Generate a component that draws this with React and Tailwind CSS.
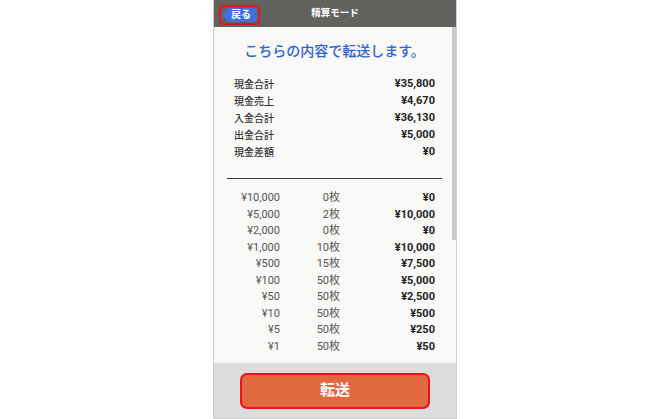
const summary = [
  ['現金合計', '¥35,800'],
  ['現金売上', '¥4,670'],
  ['入金合計', '¥36,130'],
  ['出金合計', '¥5,000'],
  ['現金差額', '¥0'],
];

const coins = [
  ['¥10,000', '0枚', '¥0'],
  ['¥5,000', '2枚', '¥10,000'],
  ['¥2,000', '0枚', '¥0'],
  ['¥1,000', '10枚', '¥10,000'],
  ['¥500', '15枚', '¥7,500'],
  ['¥100', '50枚', '¥5,000'],
  ['¥50', '50枚', '¥2,500'],
  ['¥10', '50枚', '¥500'],
  ['¥5', '50枚', '¥250'],
  ['¥1', '50枚', '¥50'],
];

const App = () => {
  return (
    <div className="w-[670px] h-[419px] bg-white flex font-['Roboto','Noto_Sans_CJK_JP',sans-serif]">
      <div className="ml-[213px] w-[244px] h-full flex flex-col border-x border-b border-[#cfd0ce]">
        {/* header */}
        <div className="h-[27px] shrink-0 bg-[#62635f] grid grid-cols-[1fr_auto_1fr] items-center">
          <div className="pl-[5px] pt-[2px] flex">
            <div className="border-2 border-[#e3161c] rounded-[4px] p-[1px] flex">
              <div className="flex items-stretch h-[14px]">
                <svg width="6" height="14" viewBox="0 0 6 14" className="block">
                  <polygon points="6,0 0,7 6,14" fill="#3f6fe0" />
                </svg>
                <div className="bg-[#3f6fe0] rounded-r-[3px] pl-[3px] pr-[6px] text-white text-[10px] font-bold leading-[14px]">
                  戻る
                </div>
              </div>
            </div>
          </div>
          <div className="text-white text-[9.5px] font-bold">精算モード</div>
          <div />
        </div>

        {/* body */}
        <div className="flex-1 bg-[#f9f9f7] flex min-h-0">
          <div className="flex-1 pl-[13px] pr-[10px]">
            <div className="pt-[16px] text-center text-[#2f62d6] text-[14px] leading-[17px] font-medium">
              こちらの内容で転送します。
            </div>

            <div className="mt-[16px] px-[7px]">
              {summary.map(([label, value]) => (
                <div key={label} className="h-[17px] flex items-center justify-between">
                  <span className="text-[10px] font-medium text-[#333]">{label}</span>
                  <span className="text-[11px] font-bold text-[#222]">{value}</span>
                </div>
              ))}
            </div>

            <div className="mt-[17px] h-px bg-[#333]" />

            <div className="mt-[11px] px-[7px]">
              {coins.map(([yen, count, total]) => (
                <div key={yen} className="h-[16.5px] grid grid-cols-[46px_60px_1fr] items-center text-[11px]">
                  <span className="text-right text-[#555]">{yen}</span>
                  <span className="text-right text-[#555]">{count}</span>
                  <span className="text-right font-bold text-[#222]">{total}</span>
                </div>
              ))}
            </div>
          </div>
          <div className="w-[4px] shrink-0">
            <div className="h-[213px] bg-[#c9c9c9]" />
          </div>
        </div>

        {/* footer */}
        <div className="h-[55px] shrink-0 bg-[#dcdddb] flex items-center justify-center">
          <button className="w-[190px] h-[36px] rounded-[7px] border-2 border-[#e8141a] bg-[#e0693f] text-white text-[15px] font-bold">
            転送
          </button>
        </div>
      </div>
    </div>
  );
};

export default App;
